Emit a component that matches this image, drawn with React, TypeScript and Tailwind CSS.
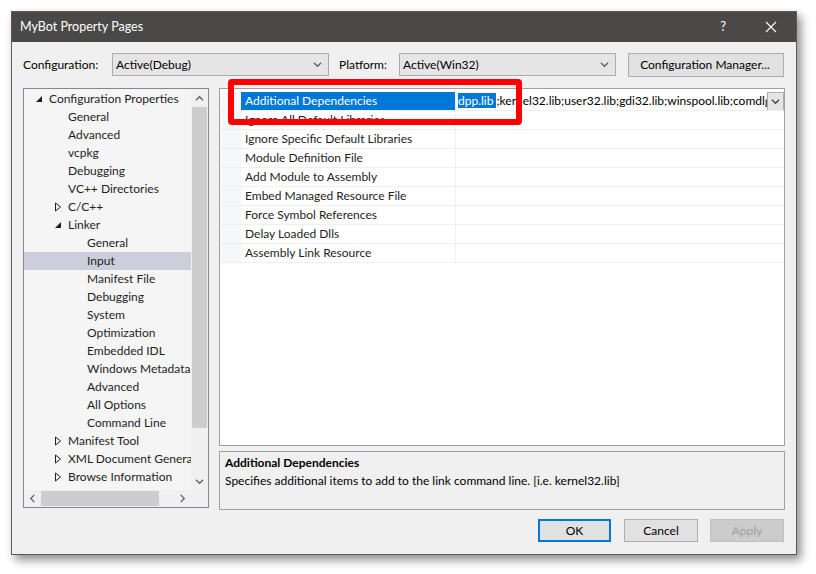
import React from "react";

type TreeItem = { label: string; level: number; arrow?: "open" | "closed"; selected?: boolean };

const TREE: TreeItem[] = [
  { label: "Configuration Properties", level: 0, arrow: "open" },
  { label: "General", level: 1 },
  { label: "Advanced", level: 1 },
  { label: "vcpkg", level: 1 },
  { label: "Debugging", level: 1 },
  { label: "VC++ Directories", level: 1 },
  { label: "C/C++", level: 1, arrow: "closed" },
  { label: "Linker", level: 1, arrow: "open" },
  { label: "General", level: 2 },
  { label: "Input", level: 2, selected: true },
  { label: "Manifest File", level: 2 },
  { label: "Debugging", level: 2 },
  { label: "System", level: 2 },
  { label: "Optimization", level: 2 },
  { label: "Embedded IDL", level: 2 },
  { label: "Windows Metadata", level: 2 },
  { label: "Advanced", level: 2 },
  { label: "All Options", level: 2 },
  { label: "Command Line", level: 2 },
  { label: "Manifest Tool", level: 1, arrow: "closed" },
  { label: "XML Document Generator", level: 1, arrow: "closed" },
  { label: "Browse Information", level: 1, arrow: "closed" },
];

const PROPS = [
  "Additional Dependencies",
  "Ignore All Default Libraries",
  "Ignore Specific Default Libraries",
  "Module Definition File",
  "Add Module to Assembly",
  "Embed Managed Resource File",
  "Force Symbol References",
  "Delay Loaded Dlls",
  "Assembly Link Resource",
];

// small chevron used by combo boxes and scrollbars
const Chevron = ({ dir, color = "#606060", size = 9 }: { dir: "up" | "down" | "left" | "right"; color?: string; size?: number }) => {
  const rot = { down: 0, up: 180, left: 90, right: -90 }[dir];
  return (
    <svg width={size} height={size} viewBox="0 0 10 10" style={{ transform: `rotate(${rot}deg)` }}>
      <path d="M1 3 L5 7 L9 3" fill="none" stroke={color} strokeWidth="1.4" />
    </svg>
  );
};

const TreeArrow = ({ kind }: { kind: "open" | "closed" }) =>
  kind === "open" ? (
    <svg width="8" height="8" viewBox="0 0 8 8">
      <path d="M7 1 L7 7 L1 7 Z" fill="#1e1e1e" />
    </svg>
  ) : (
    <svg width="8" height="10" viewBox="0 0 8 10">
      <path d="M1.5 1 L6.5 5 L1.5 9 Z" fill="none" stroke="#1e1e1e" strokeWidth="1" />
    </svg>
  );

export default function App() {
  return (
    <div className="relative w-[816px] h-[574px] bg-white overflow-hidden font-['Lato','Liberation_Sans',sans-serif] text-[12px] text-black">
      <div className="ml-[11px] mt-[11px] w-[786px] h-[544px] border border-[#5a5a5a] bg-[#f0f0f0] shadow-[4px_5px_9px_rgba(0,0,0,0.45)] flex flex-col">
        {/* title bar */}
        <div className="h-[30px] bg-[#4a4947] flex items-center text-white">
          <span className="ml-[8px] text-[12.5px]">MyBot Property Pages</span>
          <span className="ml-auto mr-[39px] text-[13px]">?</span>
          <svg width="12" height="12" viewBox="0 0 12 12" className="mr-[19px]">
            <path d="M1 1 L11 11 M11 1 L1 11" stroke="#fff" strokeWidth="1.1" />
          </svg>
        </div>

        {/* toolbar */}
        <div className="flex items-center pt-[11px] pl-[11px] h-[34px]">
          <span className="w-[89px]">Configuration:</span>
          <div className="w-[217px] h-[23px] border border-[#acacac] bg-[#e5e5e5] flex items-center pl-[3px]">
            <span>Active(Debug)</span>
            <span className="ml-auto mr-[6px]"><Chevron dir="down" /></span>
          </div>
          <span className="ml-[10px] w-[60px]">Platform:</span>
          <div className="w-[217px] h-[23px] border border-[#acacac] bg-[#e5e5e5] flex items-center pl-[3px]">
            <span>Active(Win32)</span>
            <span className="ml-auto mr-[6px]"><Chevron dir="down" /></span>
          </div>
          <div className="ml-[12px] w-[156px] h-[24px] border border-[#adadad] bg-[#e1e1e1] flex items-center justify-center pr-[2px]">
            Configuration Manager...
          </div>
        </div>

        {/* main area */}
        <div className="flex mt-[12px] pl-[11px]">
          {/* tree panel */}
          <div className="w-[186px] h-[420px] border border-[#828790] flex flex-col">
            <div className="flex h-[401px]">
              <div className="w-[167px] shrink-0 bg-[#f5f5f5] pt-[1px] overflow-hidden">
                {TREE.map((t, i) => (
                  <div
                    key={i}
                    className={`h-[18px] flex items-center whitespace-nowrap ${t.selected ? "bg-[#cccedb]" : ""}`}
                    style={{ paddingLeft: 25 + t.level * 19 }}
                  >
                    {t.arrow && (
                      <span className="-ml-[14px] w-[14px] shrink-0 flex items-center">
                        <TreeArrow kind={t.arrow} />
                      </span>
                    )}
                    <span className="text-[#1e1e1e]">{t.label}</span>
                  </div>
                ))}
              </div>
              <div className="w-[17px] shrink-0 bg-[#f0f0f0] flex flex-col items-center">
                <div className="h-[18px] flex items-center justify-center"><Chevron dir="up" /></div>
                <div className="w-[15px] h-[321px] bg-[#cdcdcd]" />
                <div className="mt-auto h-[18px] flex items-center justify-center"><Chevron dir="down" /></div>
              </div>
            </div>
            <div className="flex h-[17px] bg-[#f0f0f0]">
              <div className="w-[167px] flex items-center">
                <div className="w-[17px] flex justify-center"><Chevron dir="left" /></div>
                <div className="h-[15px] w-[118px] bg-[#cdcdcd]" />
                <div className="ml-auto w-[17px] flex justify-center"><Chevron dir="right" /></div>
              </div>
              <div className="w-[17px]" />
            </div>
          </div>

          {/* property grid + description */}
          <div className="ml-[10px] w-[566px] flex flex-col">
            <div className="h-[358px] border border-[#a0a0a0] bg-white pt-[3px]">
              {PROPS.map((p, i) => (
                <div key={p} className="flex h-[19px] border-b border-[#f0f0f0]">
                  <div className="w-[21px] bg-[#f5f7fb]" />
                  <div
                    className={`w-[215px] border-r border-[#f0f0f0] flex items-center pl-[4px] whitespace-nowrap ${
                      i === 0 ? "bg-[#0078d7] text-white" : "text-[#1e1e1e]"
                    }`}
                  >
                    {p}
                  </div>
                  {i === 0 ? (
                    <div className="flex-1 flex items-center overflow-hidden">
                      <div className="flex-1 overflow-hidden whitespace-nowrap pl-[2px]">
                        <span className="bg-[#0078d7] text-white pr-[3px]">dpp.lib</span>
                        <span>;kernel32.lib;user32.lib;gdi32.lib;winspool.lib;comdlg32.lib;advapi32.lib</span>
                      </div>
                      <div className="w-[17px] h-[19px] border border-[#adadad] bg-[#e5e5e5] flex items-center justify-center">
                        <Chevron dir="down" color="#404040" />
                      </div>
                    </div>
                  ) : (
                    <div className="flex-1" />
                  )}
                </div>
              ))}
            </div>
            <div className="mt-[5px] h-[59px] border border-[#a0a0a0] bg-[#f0f0f0] px-[5px] pt-[2px]">
              <div className="font-bold leading-[18px]">Additional Dependencies</div>
              <div className="leading-[18px]">Specifies additional items to add to the link command line. [i.e. kernel32.lib]</div>
            </div>
          </div>
        </div>

        {/* buttons */}
        <div className="flex justify-end mt-[9px] pr-[12px] gap-[12px]">
          <div className="w-[73px] h-[23px] border-2 border-[#0078d7] bg-[#e1e1e1] flex items-center justify-center mr-[1px]">OK</div>
          <div className="w-[74px] h-[23px] border border-[#adadad] bg-[#e1e1e1] flex items-center justify-center">Cancel</div>
          <div className="w-[74px] h-[23px] border border-[#bfbfbf] bg-[#cccccc] text-[#a0a0a0] flex items-center justify-center">Apply</div>
        </div>
      </div>

      {/* red annotation box */}
      <div className="absolute left-[228px] top-[79px] w-[294px] h-[46px] border-[6px] border-[#ff0000] rounded-[4px]" />
    </div>
  );
}
